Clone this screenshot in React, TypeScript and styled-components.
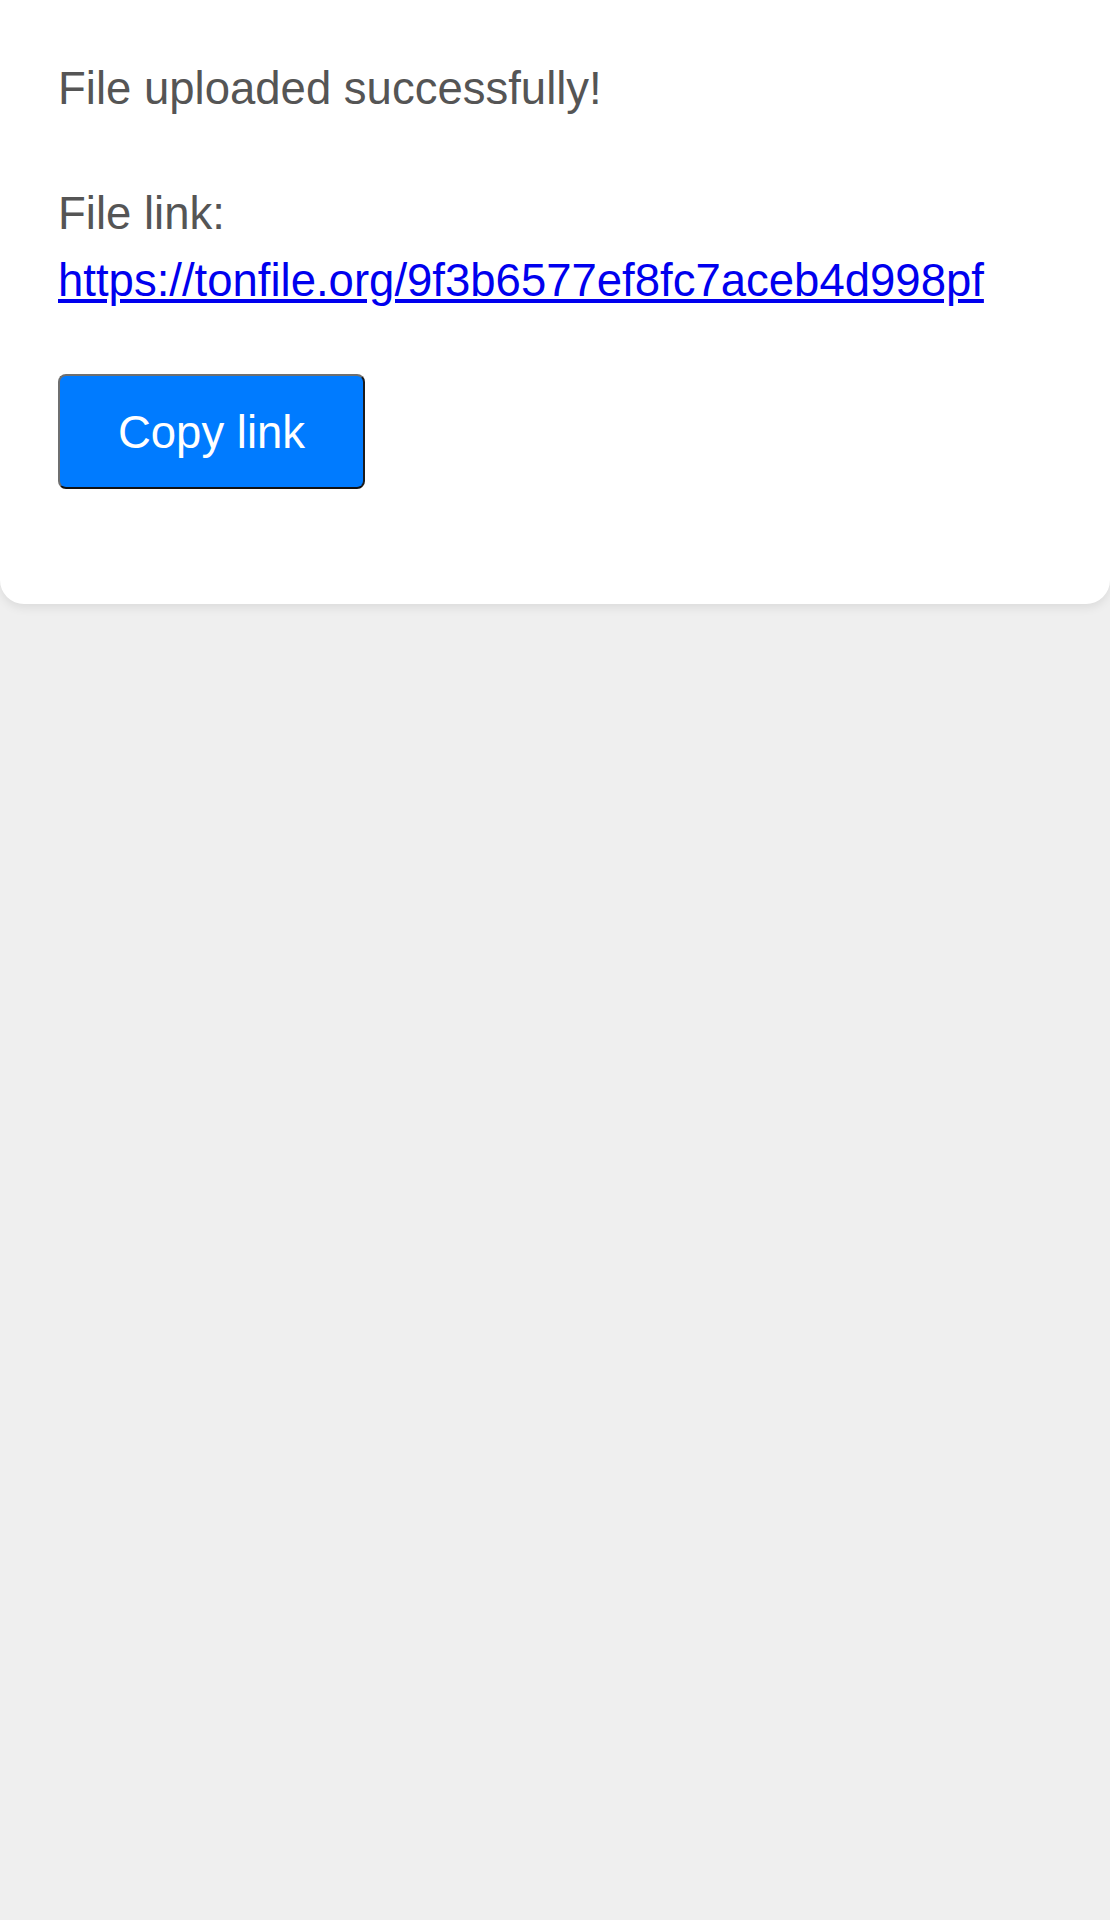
import React from "react";
import styled, { createGlobalStyle } from "styled-components";

const GlobalStyle = createGlobalStyle`
  html, body {
    margin: 0;
    padding: 0;
    background: #efefef;
    font-family: Arial, "Liberation Sans", sans-serif;
  }
  body {
    min-height: 1920px;
  }
`;

const Page = styled.div`
  width: 100%;
  min-height: 1920px;
  background: #efefef;
`;

const Card = styled.section`
  background: #ffffff;
  border-radius: 0 0 24px 24px;
  box-shadow: 0 4px 10px rgba(0, 0, 0, 0.08);
  padding: 55px 58px 115px;
  color: #555555;
  font-size: 45.5px;
  line-height: 67.5px;
`;

const Message = styled.p`
  margin: 0 0 57px;
`;

const LinkBlock = styled.p`
  margin: 0 0 59px;
`;

const FileLink = styled.a`
  color: #0000ee;
  text-decoration: underline;
`;

const CopyButton = styled.button`
  display: block;
  box-sizing: border-box;
  width: 307px;
  height: 115px;
  padding: 4px 0 0;
  background: #007bff;
  color: #ffffff;
  font-family: Arial, "Liberation Sans", sans-serif;
  font-size: 45.5px;
  border: 2px solid;
  border-color: #6f6f6f #1c1c1c #111111 #6f6f6f;
  border-radius: 8px;
  cursor: pointer;
`;

export default function App() {
  return (
    <Page>
      <GlobalStyle />
      <Card>
        <Message>File uploaded successfully!</Message>
        <LinkBlock>
          File link:
          <br />
          <FileLink href="#">https://tonfile.org/9f3b6577ef8fc7aceb4d998pf</FileLink>
        </LinkBlock>
        <CopyButton>Copy link</CopyButton>
      </Card>
    </Page>
  );
}
